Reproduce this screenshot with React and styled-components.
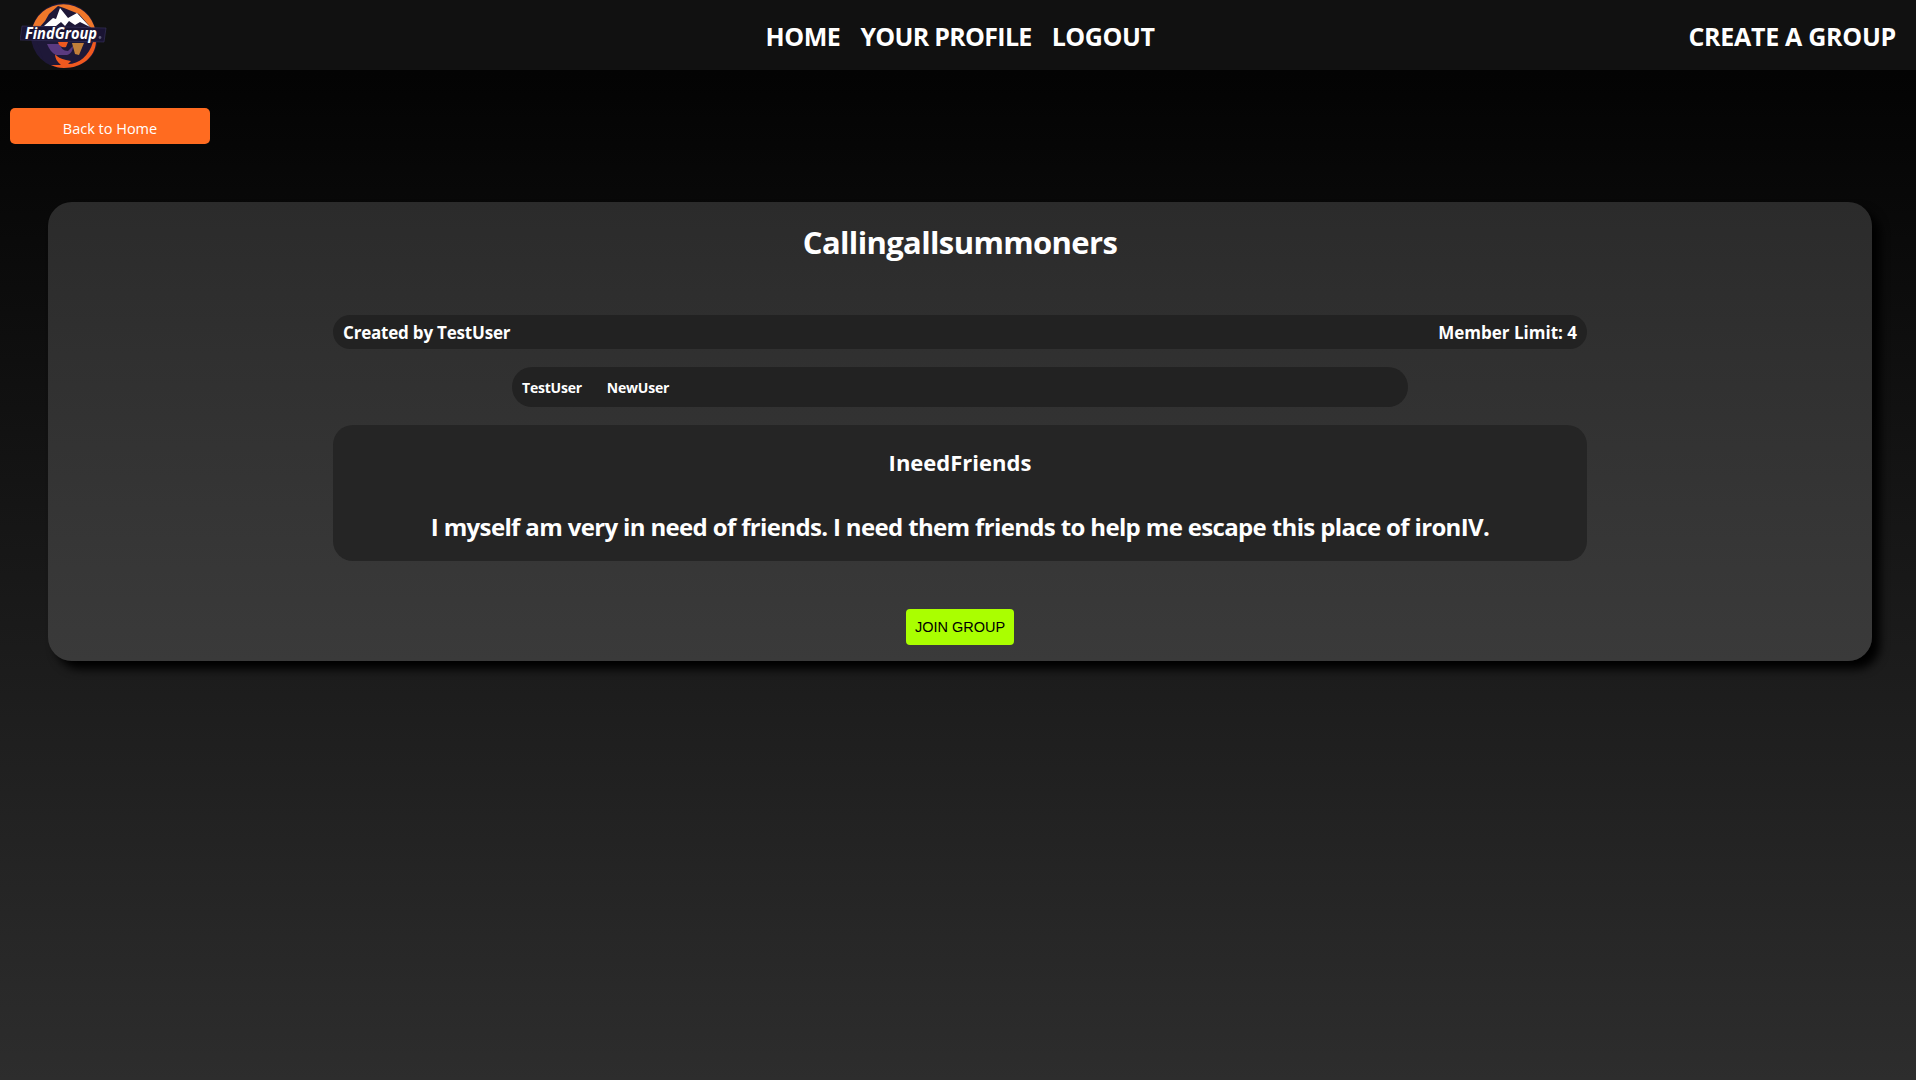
import React from 'react';
import styled, { createGlobalStyle } from 'styled-components';

const GlobalStyle = createGlobalStyle`
  html, body {
    margin: 0;
    padding: 0;
    min-height: 100%;
  }

  body {
    min-height: 1080px;
    background: linear-gradient(180deg, #000000 0%, #2d2d2d 100%);
    background-attachment: fixed;
    font-family: "Open Sans", "Noto Sans", sans-serif;
    color: #ffffff;
  }
`;

const Header = styled.header`
  height: 70px;
  background-color: #111111;
  display: grid;
  grid-template-columns: 1fr auto 1fr;
  align-items: center;
  padding: 0 20px 0 24px;
`;

const LogoLink = styled.a`
  display: flex;
  align-items: center;
  height: 70px;
  margin-left: -4px;
`;

const Nav = styled.nav`
  display: flex;
  gap: 20px;
  padding-top: 2px;
`;

const NavLink = styled.a`
  color: #ffffff;
  font-size: 25px;
  font-weight: 700;
  line-height: 34px;
  letter-spacing: ${(props) => props.$tracking || '-0.42px'};
  text-decoration: none;
`;

const CreateLink = styled(NavLink)`
  justify-self: end;
  padding-top: 2px;
`;

const Main = styled.main`
  padding: 38px 10px 0;
`;

const BackButton = styled.button`
  display: block;
  width: 200px;
  height: 36px;
  border: none;
  border-radius: 5px;
  background-color: #ff6b20;
  color: #ffffff;
  font-family: inherit;
  font-size: 14.5px;
  padding: 5px 0 0;
`;

const Card = styled.section`
  margin: 58px 34px 0 38px;
  height: 459px;
  box-sizing: border-box;
  border-radius: 24px;
  background: linear-gradient(180deg, #2b2b2b 0%, #3a3a3a 100%);
  box-shadow: 8px 8px 10px #000000;
  padding: 20px 285px 16px;
  display: flex;
  flex-direction: column;
  align-items: center;
`;

const Title = styled.h1`
  margin: 0 0 53px;
  font-size: 31px;
  line-height: 40px;
  font-weight: 700;
  letter-spacing: -0.63px;
  text-align: center;
`;

const InfoBar = styled.div`
  width: 100%;
  height: 34px;
  box-sizing: border-box;
  padding: 0 10px;
  border-radius: 17px;
  background-color: #222222;
  display: flex;
  justify-content: space-between;
  align-items: center;
  font-size: 17px;
  font-weight: 700;
  letter-spacing: -0.2px;
`;

const MemberLimit = styled.span`
  letter-spacing: 0;
`;

const Members = styled.div`
  width: 896px;
  height: 40px;
  box-sizing: border-box;
  margin-top: 18px;
  padding: 0 10px;
  border-radius: 20px;
  background-color: #222222;
  display: flex;
  align-items: center;
  gap: 25px;
  font-size: 14px;
  font-weight: 700;
  letter-spacing: -0.22px;
`;

const Description = styled.div`
  width: 100%;
  height: 136px;
  box-sizing: border-box;
  margin-top: 18px;
  padding: 22px 0 0;
  border-radius: 20px;
  background-color: #252525;
  text-align: center;
  font-weight: 700;
`;

const GroupName = styled.h2`
  margin: 0 0 34px;
  font-size: 22px;
  line-height: 30px;
  font-weight: 700;
`;

const GroupText = styled.p`
  margin: 0;
  font-size: 24px;
  line-height: 32px;
  letter-spacing: -0.65px;
`;

const JoinButton = styled.button`
  width: 108px;
  height: 36px;
  margin-top: 48px;
  flex-shrink: 0;
  border: none;
  border-radius: 4px;
  background-color: #aaff00;
  color: #000000;
  font-family: "Liberation Sans", Arial, sans-serif;
  font-size: 14.5px;
  padding: 0;
`;

const Logo = () => (
  <svg width="88" height="70" viewBox="0 0 88 70" aria-label="FindGroup logo">
    <circle cx="43.5" cy="35.5" r="32.5" fill="#1e1838" />
    <path d="M11.5 31A32.5 32.5 0 0 1 75.5 31z" fill="#f0772a" />
    <path d="M18 29l7-8 4-7 9-8 6 2 10 4 5 2 13 15z" fill="#1e1838" />
    <path d="M24 26l9-8 3 1 4-11 8 10 9-5 13 14-10-5-5 3-6-4-4 5-4-4-5 4z" fill="#ffffff" />
    <path d="M17 42h60c0 3-1 6-2 8-3 9-14 18-31 18-9 0-16-3-21-9z" fill="#1e1838" />
    <path d="M73 42h3c-1 15-14 26-32 26-5 0-9-1-13-3l10 0c-4-3-6-7-6-11 2 3 6 5 11 6l5 1-3 3c11 0 21-8 25-22z" fill="#f0591f" />
    <path d="M27 44h13c1 4 3 7 8 7l5-5c0 4-2 8-6 9H36c-4-2-7-6-9-11z" fill="#5a3a80" />
    <path d="M52 43h12l-5 12-4-1z" fill="#c27f3a" />
    <path d="M38 42h10l-2 5c-4 1-7-1-8-5z" fill="#f0591f" />
    <polygon points="2,26 86,28 84,42 0,40" fill="#1a1433" stroke="#39345f" strokeWidth="0.6" />
    <text x="5" y="38.5" fill="#ffffff" fontFamily="Open Sans, sans-serif" fontSize="15.5" fontStyle="italic" fontWeight="700" textLength="72" lengthAdjust="spacingAndGlyphs">FindGroup</text>
    <circle cx="80" cy="37.5" r="1.4" fill="#5d5a78" />
  </svg>
);

const App = () => {
  return (
    <>
      <GlobalStyle />
      <Header>
        <LogoLink href="#home">
          <Logo />
        </LogoLink>
        <Nav>
          <NavLink href="#home">HOME</NavLink>
          <NavLink href="#profile" $tracking="-0.7px">YOUR PROFILE</NavLink>
          <NavLink href="#logout">LOGOUT</NavLink>
        </Nav>
        <CreateLink href="#create" $tracking="-0.28px">CREATE A GROUP</CreateLink>
      </Header>
      <Main>
        <BackButton>Back to Home</BackButton>
        <Card>
          <Title>Callingallsummoners</Title>
          <InfoBar>
            <span>Created by TestUser</span>
            <MemberLimit>Member Limit: 4</MemberLimit>
          </InfoBar>
          <Members>
            <span>TestUser</span>
            <span>NewUser</span>
          </Members>
          <Description>
            <GroupName>IneedFriends</GroupName>
            <GroupText>I myself am very in need of friends. I need them friends to help me escape this place of ironIV.</GroupText>
          </Description>
          <JoinButton>JOIN GROUP</JoinButton>
        </Card>
      </Main>
    </>
  );
};

export default App;
